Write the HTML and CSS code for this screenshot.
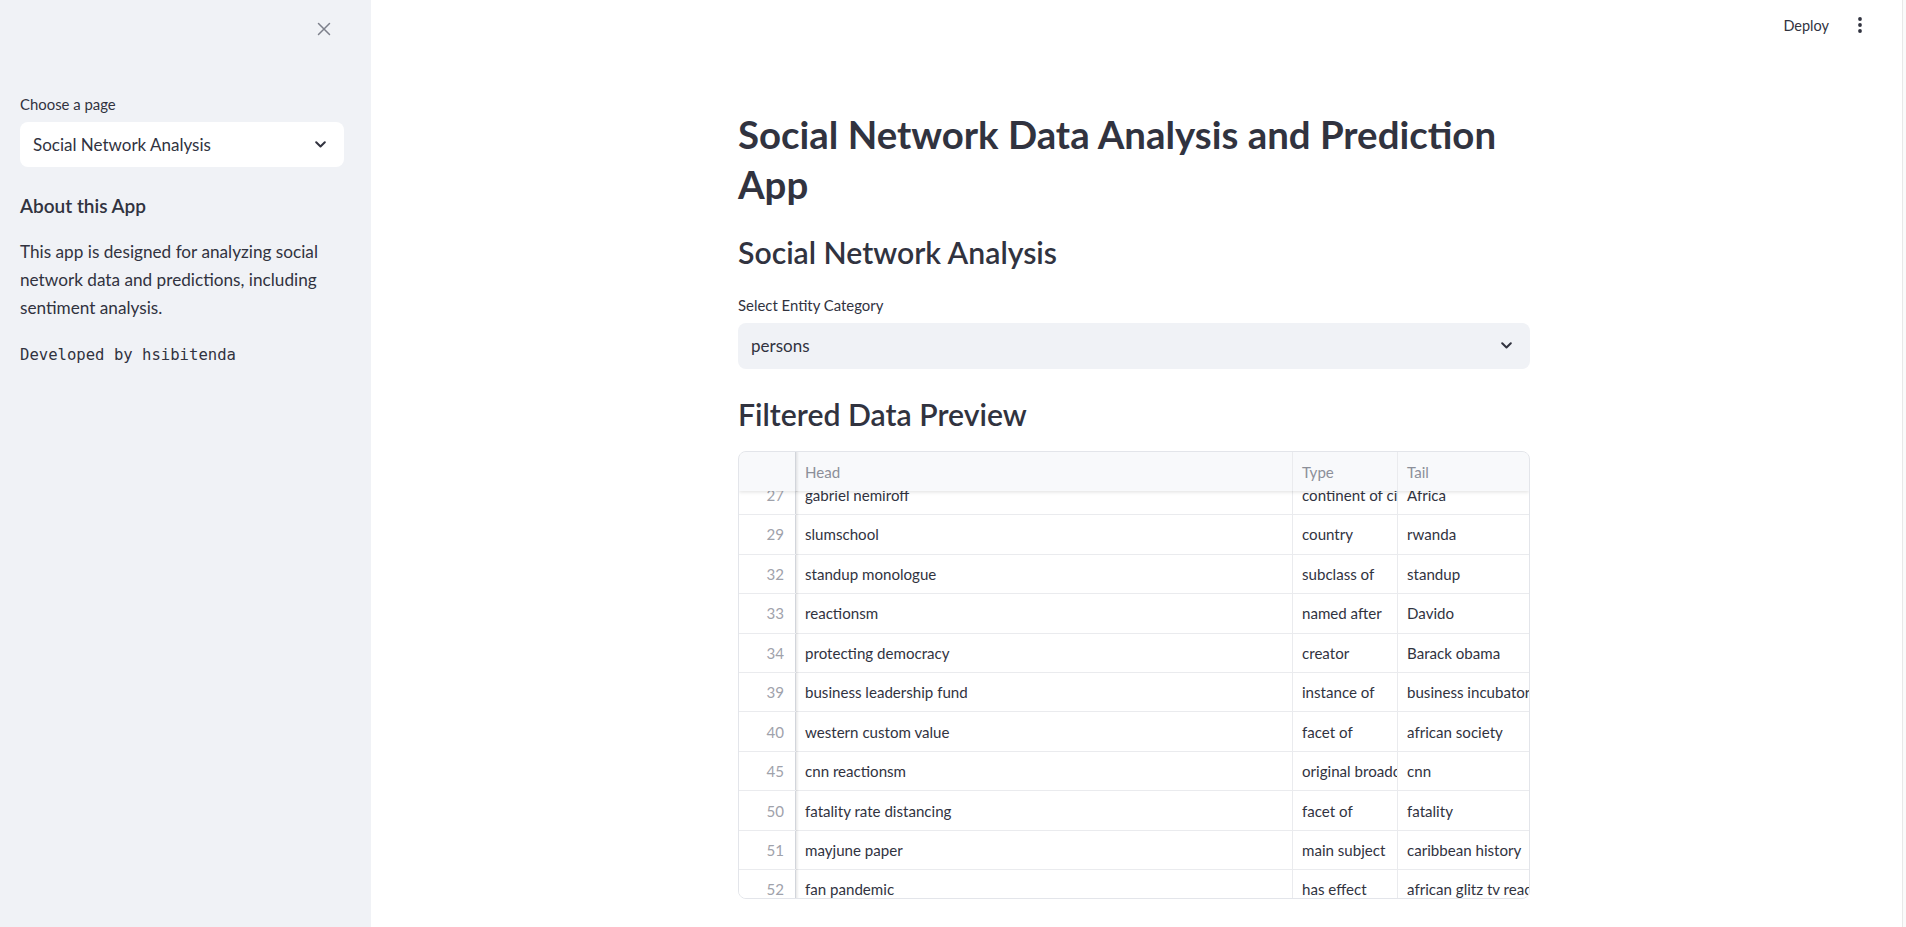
FILE: index.html
```html
<!DOCTYPE html>
<html lang="en">
<head>
<meta charset="utf-8">
<title>Social Network Data Analysis and Prediction App</title>
<link rel="stylesheet" href="styles.css">
</head>
<body>
<div class="app">
  <aside class="sidebar">
    <div class="sidebar-head">
      <button class="close-btn" aria-label="Close sidebar">
        <svg width="14" height="14" viewBox="0 0 14 14"><path d="M1.5 1.5L12.5 12.5M12.5 1.5L1.5 12.5" stroke="currentColor" stroke-width="1.5" stroke-linecap="round"/></svg>
      </button>
    </div>
    <div class="sidebar-body">
      <div class="field-label side-label">Choose a page</div>
      <div class="select select-light">
        <span>Social Network Analysis</span>
        <svg class="chev" width="11" height="7" viewBox="0 0 11 7"><path d="M1.2 1.2L5.5 5.5L9.8 1.2" fill="none" stroke="currentColor" stroke-width="2" stroke-linecap="round" stroke-linejoin="round"/></svg>
      </div>
      <h3 class="side-heading">About this App</h3>
      <p class="side-text">This app is designed for analyzing social network data and predictions, including sentiment analysis.</p>
      <p class="mono">Developed by hsibitenda</p>
    </div>
  </aside>
  <main class="main">
    <header class="topbar">
      <span class="deploy">Deploy</span>
      <svg class="dots" width="4" height="16" viewBox="0 0 4 16"><circle cx="2" cy="2" r="1.9"/><circle cx="2" cy="8" r="1.9"/><circle cx="2" cy="14" r="1.9"/></svg>
    </header>
    <div class="content">
      <h1 class="title">Social Network Data Analysis and Prediction App</h1>
      <h2 class="section">Social Network Analysis</h2>
      <div class="field-label">Select Entity Category</div>
      <div class="select select-grey">
        <span>persons</span>
        <svg class="chev" width="11" height="7" viewBox="0 0 11 7"><path d="M1.2 1.2L5.5 5.5L9.8 1.2" fill="none" stroke="currentColor" stroke-width="2" stroke-linecap="round" stroke-linejoin="round"/></svg>
      </div>
      <h2 class="section section-table">Filtered Data Preview</h2>
      <div class="grid">
        <div class="grid-header">
          <div class="cell num"></div>
          <div class="cell hcell">Head</div>
          <div class="cell hcell">Type</div>
          <div class="cell hcell">Tail</div>
        </div>
        <div class="grid-body">
          <div class="rows">
            <div class="row"><div class="cell num">27</div><div class="cell">gabriel nemiroff</div><div class="cell">continent of citizenship</div><div class="cell">Africa</div></div>
            <div class="row"><div class="cell num">29</div><div class="cell">slumschool</div><div class="cell">country</div><div class="cell">rwanda</div></div>
            <div class="row"><div class="cell num">32</div><div class="cell">standup monologue</div><div class="cell">subclass of</div><div class="cell">standup</div></div>
            <div class="row"><div class="cell num">33</div><div class="cell">reactionsm</div><div class="cell">named after</div><div class="cell">Davido</div></div>
            <div class="row"><div class="cell num">34</div><div class="cell">protecting democracy</div><div class="cell">creator</div><div class="cell">Barack obama</div></div>
            <div class="row"><div class="cell num">39</div><div class="cell">business leadership fund</div><div class="cell">instance of</div><div class="cell">business incubator</div></div>
            <div class="row"><div class="cell num">40</div><div class="cell">western custom value</div><div class="cell">facet of</div><div class="cell">african society</div></div>
            <div class="row"><div class="cell num">45</div><div class="cell">cnn reactionsm</div><div class="cell">original broadcaster</div><div class="cell">cnn</div></div>
            <div class="row"><div class="cell num">50</div><div class="cell">fatality rate distancing</div><div class="cell">facet of</div><div class="cell">fatality</div></div>
            <div class="row"><div class="cell num">51</div><div class="cell">mayjune paper</div><div class="cell">main subject</div><div class="cell">caribbean history</div></div>
            <div class="row"><div class="cell num">52</div><div class="cell">fan pandemic</div><div class="cell">has effect</div><div class="cell">african glitz tv reaction</div></div>
          </div>
        </div>
      </div>
    </div>
  </main>
  <div class="scroll-edge"></div>
</div>
</body>
</html>
```

FILE: styles.css
```css
* { box-sizing: border-box; }

html, body {
  margin: 0;
  padding: 0;
  height: 100%;
  overflow: hidden;
  background: #ffffff;
}

body {
  font-family: "Lato", "Noto Sans", sans-serif;
  color: #31333f;
}

.app {
  display: flex;
  height: 927px;
}

/* ---------- Sidebar ---------- */
.sidebar {
  width: 371px;
  flex: 0 0 371px;
  background: #f0f2f6;
  padding: 0 27px 0 20px;
}

.sidebar-head {
  height: 58px;
  display: flex;
  align-items: center;
  justify-content: flex-end;
  margin-right: 13px;
}

.close-btn {
  border: 0;
  background: transparent;
  padding: 0;
  width: 14px;
  height: 14px;
  color: #7d808b;
  display: flex;
}

.sidebar-body {
  padding-top: 34.5px;
}

.field-label {
  font-size: 14.9px;
  line-height: 23.84px;
  margin: 0 0 5px;
  color: #31333f;
}

.side-label { margin-bottom: 5.66px; }

.select {
  height: 46px;
  border-radius: 8px;
  display: flex;
  align-items: center;
  justify-content: space-between;
  padding: 0 18px 0 13px;
  font-size: 17px;
  color: #31333f;
}

.select-light { background: #ffffff; height: 45px; }
.select-grey { background: #f0f2f6; }

.chev { color: #31333f; display: block; }

.side-heading {
  font-size: 19px;
  font-weight: 600;
  line-height: 24px;
  margin: 26.85px 0 0;
}

.side-text {
  font-size: 17.2px;
  line-height: 28.16px;
  margin: 19.8px 0 0;
}

.mono {
  font-family: "DejaVu Sans Mono", "Liberation Mono", monospace;
  font-size: 15.6px;
  line-height: 24px;
  margin: 21px 0 0;
  color: #31333f;
}

/* ---------- Main ---------- */
.main {
  flex: 1;
  min-width: 0;
  display: flex;
  flex-direction: column;
  padding-right: 5px;
}

.topbar {
  height: 50px;
  display: flex;
  align-items: center;
  justify-content: flex-end;
  gap: 29px;
  padding-right: 35px;
}

.deploy {
  font-size: 14.5px;
  color: #31333f;
}

.dots { fill: #31333f; display: block; }

.content {
  width: 792px;
  align-self: center;
  padding-top: 59px;
}

.title {
  font-size: 38.4px;
  font-weight: 700;
  line-height: 50px;
  margin: 0;
}

.section {
  font-size: 30.2px;
  font-weight: 600;
  line-height: 34.8px;
  margin: 26.4px 0 23.6px;
}

.section-table { margin: 28.4px 0 19.4px; }

/* ---------- Data grid ---------- */
.grid {
  width: 792px;
  height: 448px;
  border: 1px solid #e3e5ea;
  border-radius: 8px;
  overflow: hidden;
  display: flex;
  flex-direction: column;
  font-size: 15.1px;
}

.grid-header,
.row {
  display: grid;
  grid-template-columns: 57px 497px 105px 150px;
}

.grid-header {
  height: 39px;
  flex: 0 0 39px;
  background: #f8f9fb;
  position: relative;
  z-index: 2;
  box-shadow: 0 1px 4px rgba(0, 0, 0, 0.13);
}

.grid-body {
  flex: 1;
  overflow: hidden;
  background: #fff;
}

.rows { margin-top: -15.4px; }

.row {
  height: 39.45px;
  border-bottom: 1px solid #eaebee;
}

.cell {
  padding: 0 9px;
  overflow: hidden;
  white-space: nowrap;
  display: flex;
  align-items: center;
  border-right: 1px solid #eaebee;
  color: #31333f;
}

.hcell { color: #8c8f99; }

.num {
  justify-content: flex-end;
  padding-right: 11px;
  color: #9fa2ab;
  border-right: 1px solid #d2d5db;
  position: relative;
  overflow: visible;
}

.num::after {
  content: "";
  position: absolute;
  top: 0;
  bottom: -1px;
  right: -4px;
  width: 3px;
  background: linear-gradient(to right, rgba(0, 0, 0, 0.09), rgba(0, 0, 0, 0));
  z-index: 1;
}

.scroll-edge {
  width: 4px;
  flex: 0 0 4px;
  background: #fafafa;
  border-left: 1px solid #e8e8e8;
}
```
